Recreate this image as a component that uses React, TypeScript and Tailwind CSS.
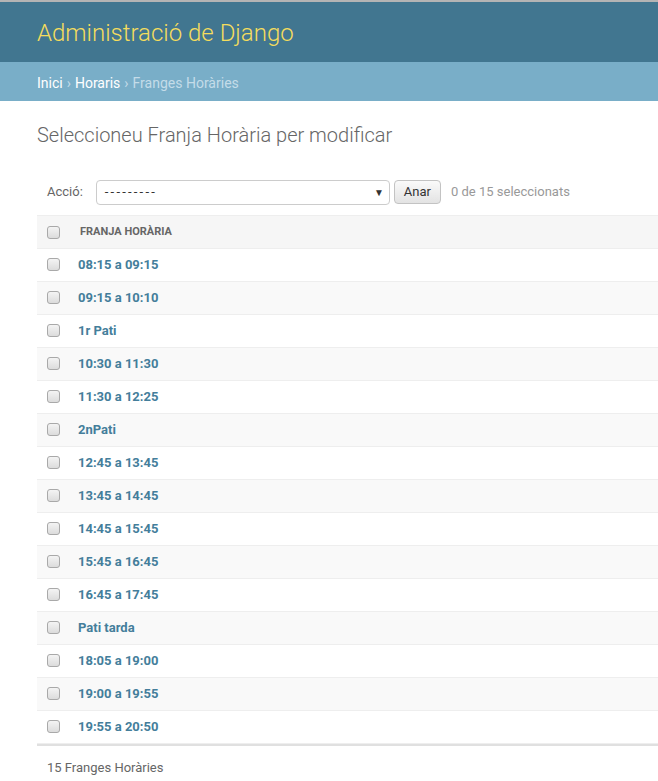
import React from 'react';

const franges = [
  '08:15 a 09:15',
  '09:15 a 10:10',
  '1r Pati',
  '10:30 a 11:30',
  '11:30 a 12:25',
  '2nPati',
  '12:45 a 13:45',
  '13:45 a 14:45',
  '14:45 a 15:45',
  '15:45 a 16:45',
  '16:45 a 17:45',
  'Pati tarda',
  '18:05 a 19:00',
  '19:00 a 19:55',
  '19:55 a 20:50',
];

function Checkbox() {
  return (
    <span className="block h-[13px] w-[13px] rounded-[3px] border border-[#a9a9a9] bg-gradient-to-b from-[#f4f4f4] to-[#dcdcdc]" />
  );
}

export default function App() {
  return (
    <div className="min-h-[781px] bg-white font-['Roboto',sans-serif] text-[13px] text-[#333]">
      <div className="h-[2px] bg-[#b4b4b4]" />
      <header className="flex h-[60px] items-center bg-[#417690] px-[37px] pt-[2px]">
        <h1 className="text-[24px] font-light text-[#f5dd5d]">Administració de Django</h1>
      </header>
      <nav className="flex h-[39px] items-center bg-[#79aec8] px-[37px] pt-[3px] text-[14px] text-[#c4dce8]">
        <span className="text-white">Inici</span>
        <span className="mx-[4px]">›</span>
        <span className="text-white">Horaris</span>
        <span className="mx-[4px]">›</span>
        <span>Franges Horàries</span>
      </nav>

      <main className="pl-[37px] pt-[21px]">
        <h2 className="text-[20px] font-light leading-[26px] text-[#666]">Seleccioneu Franja Horària per modificar</h2>

        <div className="mt-[31px] flex h-[26px] items-center pl-[10px]">
          <span className="text-[#666]">Acció:</span>
          <div className="ml-[13px] flex h-[25px] w-[294px] items-center justify-between rounded-[4px] border border-[#ccc] pl-[8px] pr-[5px] text-[#333]">
            <span className="tracking-[2.2px]">---------</span>
            <span className="text-[10px]">▼</span>
          </div>
          <button className="ml-[4px] h-[24px] rounded-[4px] border border-[#c3c3c3] bg-gradient-to-b from-[#fafafa] to-[#e3e3e3] px-[9px] text-[#333]">
            Anar
          </button>
          <span className="ml-[10px] text-[#999]">0 de 15 seleccionats</span>
        </div>

        <table className="mt-[10px] w-full border-collapse">
          <thead>
            <tr className="h-[33px] border-y border-[#eee] bg-[#f6f6f6]">
              <th className="w-[41px] pl-[10px] align-middle">
                <Checkbox />
              </th>
              <th className="text-left text-[11px] font-bold uppercase text-[#666]">
                <span className="pl-[2px]">Franja Horària</span>
              </th>
            </tr>
          </thead>
          <tbody>
            {franges.map((franja, i) => (
              <tr key={franja} className={`h-[33px] border-b border-[#eee] ${i % 2 === 1 ? 'bg-[#f9f9f9]' : 'bg-white'}`}>
                <td className="pl-[10px] align-middle">
                  <div className="-mt-[2px]">
                    <Checkbox />
                  </div>
                </td>
                <td className="align-middle font-bold text-[#447e9b]">{franja}</td>
              </tr>
            ))}
          </tbody>
        </table>
        <div className="h-[2px] bg-[#e0e0e0]" />
        <p className="pl-[10px] pt-[12px] text-[#666]">15 Franges Horàries</p>
      </main>
    </div>
  );
}
